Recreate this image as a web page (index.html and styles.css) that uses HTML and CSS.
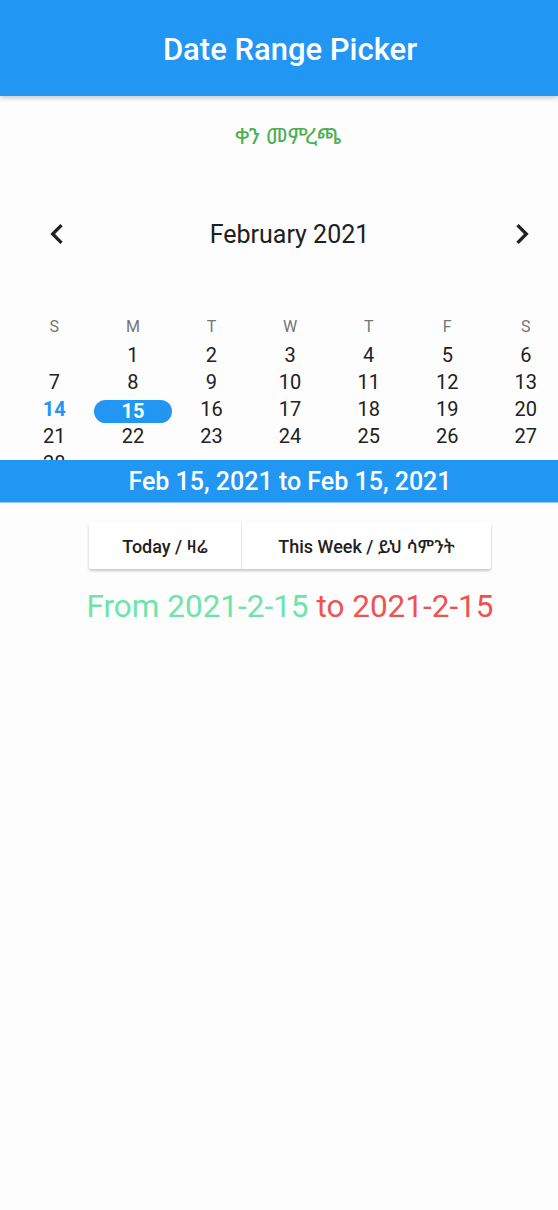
FILE: index.html
```html
<!DOCTYPE html>
<html lang="en">
<head>
<meta charset="utf-8">
<title>Date Range Picker</title>
<link rel="stylesheet" href="styles.css">
</head>
<body>
<header class="appbar"><h1 class="appbar-title">Date Range Picker</h1></header>
<main class="content">
  <p class="subtitle">ቀን መምረጫ</p>
  <div class="month-nav">
    <svg class="chev chev-left" viewBox="0 0 24 24" width="40" height="40"><path d="M15.41 7.41L14 6l-6 6 6 6 1.41-1.41L10.83 12z"/></svg>
    <span class="month-title">February 2021</span>
    <svg class="chev chev-right" viewBox="0 0 24 24" width="40" height="40"><path d="M10 6L8.59 7.41 13.17 12l-4.58 4.59L10 18l6-6z"/></svg>
  </div>
  <div class="calendar">
    <div class="grid weekdays">
      <span>S</span><span>M</span><span>T</span><span>W</span><span>T</span><span>F</span><span>S</span>
    </div>
    <div class="grid days">
      <span></span><span>1</span><span>2</span><span>3</span><span>4</span><span>5</span><span>6</span>
      <span>7</span><span>8</span><span>9</span><span>10</span><span>11</span><span>12</span><span>13</span>
      <span class="today">14</span><span class="selected"><b>15</b></span><span>16</span><span>17</span><span>18</span><span>19</span><span>20</span>
      <span>21</span><span>22</span><span>23</span><span>24</span><span>25</span><span>26</span><span>27</span>
      <span>28</span><span></span><span></span><span></span><span></span><span></span><span></span>
    </div>
  </div>
  <div class="range-bar">Feb 15, 2021 to Feb 15, 2021</div>
  <div class="toggle-group">
    <button class="toggle toggle-today">Today / ዛሬ</button>
    <button class="toggle toggle-week">This Week / ይህ ሳምንት</button>
  </div>
  <p class="result"><span class="from">From 2021-2-15</span> <span class="to">to 2021-2-15</span></p>
</main>
</body>
</html>
```
FILE: styles.css
```css
* { box-sizing: border-box; }
html, body { margin: 0; padding: 0; }
body {
  width: 558px;
  height: 1210px;
  overflow: hidden;
  background: #fdfdfd;
  font-family: Roboto, "Noto Sans", "Noto Sans Ethiopic", "Abyssinica SIL", "DejaVu Sans", sans-serif;
  color: #212121;
}
.appbar {
  height: 96px;
  background: #2196f3;
  display: flex;
  align-items: center;
  justify-content: center;
  padding-left: 22px;
  box-shadow: 0 2px 5px rgba(0,0,0,0.22);
  position: relative;
  z-index: 2;
}
.appbar-title {
  margin: 0;
  padding-top: 2px;
  font-size: 31px;
  font-weight: 500;
  color: #fff;
}
.content { display: flex; flex-direction: column; }
.subtitle {
  margin: 29px 0 0;
  line-height: 24px;
  text-align: center;
  color: #4caf50;
  font-size: 23px;
  padding-left: 18px;
}
.month-nav {
  margin-top: 65px;
  height: 40px;
  display: flex;
  align-items: center;
  padding: 0 16px 0 37px;
}
.chev { fill: #212121; display: block; flex: none; }
.month-title {
  flex: 1;
  text-align: center;
  font-size: 25px;
  color: #212121;
}
.calendar {
  margin-top: 59px;
  height: 147px;
  overflow: hidden;
}
.grid {
  display: grid;
  grid-template-columns: repeat(7, 78.6px);
  padding-left: 15px;
  width: 580px;
}
.grid span {
  height: 27px;
  line-height: 27px;
  text-align: center;
}
.weekdays span { font-size: 16px; color: #757575; }
.days { margin-top: 2px; }
.days span { font-size: 20px; color: #212121; }
.days .today { color: #2196f3; font-weight: 700; }
.days .selected { display: flex; align-items: center; justify-content: center; }
.days .selected b {
  display: block;
  width: 78px;
  height: 23px;
  line-height: 23px;
  margin-top: 4px;
  border-radius: 12px;
  background: #2196f3;
  color: #fff;
  font-weight: 700;
}
.range-bar {
  height: 43px;
  background: #2196f3;
  color: #fff;
  font-size: 25px;
  font-weight: 500;
  text-align: center;
  line-height: 43px;
  padding-left: 22px;
  border-bottom: 1px solid #8cc8f6;
}
.toggle-group {
  margin: 19px 0 0 89px;
  align-self: flex-start;
  display: flex;
  box-shadow: 0 2px 3px rgba(0,0,0,0.22);
  border-radius: 3px;
  background: #fff;
}
.toggle {
  height: 47px;
  border: none;
  background: #fff;
  font-family: inherit;
  font-size: 18px;
  font-weight: 500;
  color: #212121;
  padding: 0;
}
.toggle-today { width: 153px; border-right: 1px solid #e6e6e6; border-radius: 3px 0 0 3px; }
.toggle-week { width: 249px; border-radius: 0 3px 3px 0; }
.result {
  margin: 20px 0 0;
  text-align: center;
  font-size: 31.5px;
  line-height: 36px;
  padding-left: 22px;
}
.from { color: #6ee4a8; }
.to { color: #ef5350; }
```
